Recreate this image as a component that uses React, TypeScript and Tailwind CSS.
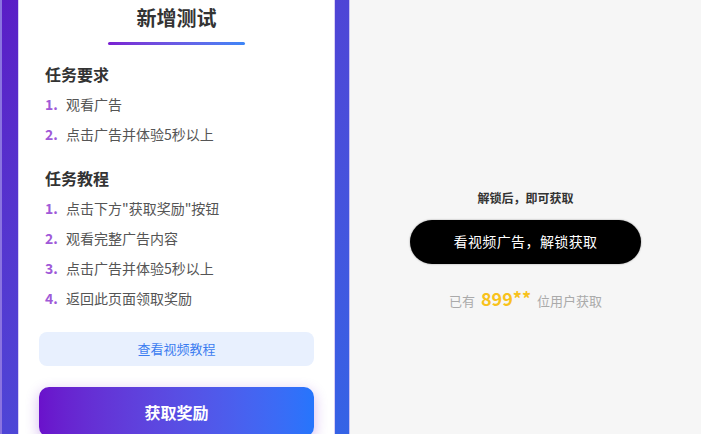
const font = { fontFamily: '"Noto Sans CJK SC", "Noto Sans", sans-serif' };

const requirements = ["观看广告", "点击广告并体验5秒以上"];
const tutorial = ['点击下方"获取奖励"按钮', "观看完整广告内容", "点击广告并体验5秒以上", "返回此页面领取奖励"];

function Section({ title, items }: { title: string; items: string[] }) {
    return (
        <div className="px-[6px]">
            <h2 className="text-[16px] leading-[22px] font-bold text-[#333]">{title}</h2>
            <ol className="mt-[4px] flex flex-col">
                {items.map((item, i) => (
                    <li key={item} className="flex items-center h-[30px] text-[14px] text-[#555]">
                        <span className="w-[21px] font-bold text-[#a05ad8]">{i + 1}.</span>
                        <span>{item}</span>
                    </li>
                ))}
            </ol>
        </div>
    );
}

export default function App() {
    return (
        <div className="w-[701px] h-[434px] flex overflow-hidden" style={font}>
            <div className="w-[350px] h-full bg-gradient-to-br from-[#5a1cc6] to-[#3463e6] pl-[16px] pr-[14px] border-l-2 border-[#8b74e0] border-r border-r-[#c9c2f2]">
                <div className="h-[460px] bg-white border border-[#d9cff5] border-t-0 px-[20px]">
                    <h1 className="text-center text-[20px] leading-[30px] font-bold text-[#333] pt-[3px]">新增测试</h1>
                    <div className="mx-auto mt-[9px] w-[137px] h-[3px] rounded-full bg-gradient-to-r from-[#7a1fd2] to-[#3b86f7]" />
                    <div className="mt-[18px]">
                        <Section title="任务要求" items={requirements} />
                    </div>
                    <div className="mt-[18px]">
                        <Section title="任务教程" items={tutorial} />
                    </div>
                    <button className="mt-[19px] w-full h-[34px] rounded-[8px] bg-[#e8f0fe] text-[13px] text-[#3b7cf0]">
                        查看视频教程
                    </button>
                    <button className="mt-[21px] w-full h-[50px] rounded-[10px] bg-gradient-to-r from-[#6a11cb] to-[#2575fc] text-white text-[16px] font-bold shadow-[0_4px_14px_rgba(106,17,203,0.3)]">
                        获取奖励
                    </button>
                </div>
            </div>
            <div className="flex-1 h-full bg-[#f6f6f6] flex flex-col items-center justify-center pt-[66px]">
                <p className="text-[12px] font-bold text-[#333]">解锁后，即可获取</p>
                <button className="mt-[13px] w-[231px] h-[44px] rounded-full bg-black text-white text-[14px] tracking-[0.4px] shadow-[0_0_2px_rgba(0,0,0,0.4)]">
                    看视频广告，解锁获取
                </button>
                <p className="mt-[21px] text-[13px] text-[#aaa] flex items-baseline gap-[6px]">
                    <span>已有</span>
                    <span className="text-[18px] font-bold text-[#f8c21c]">899**</span>
                    <span>位用户获取</span>
                </p>
            </div>
        </div>
    );
}
